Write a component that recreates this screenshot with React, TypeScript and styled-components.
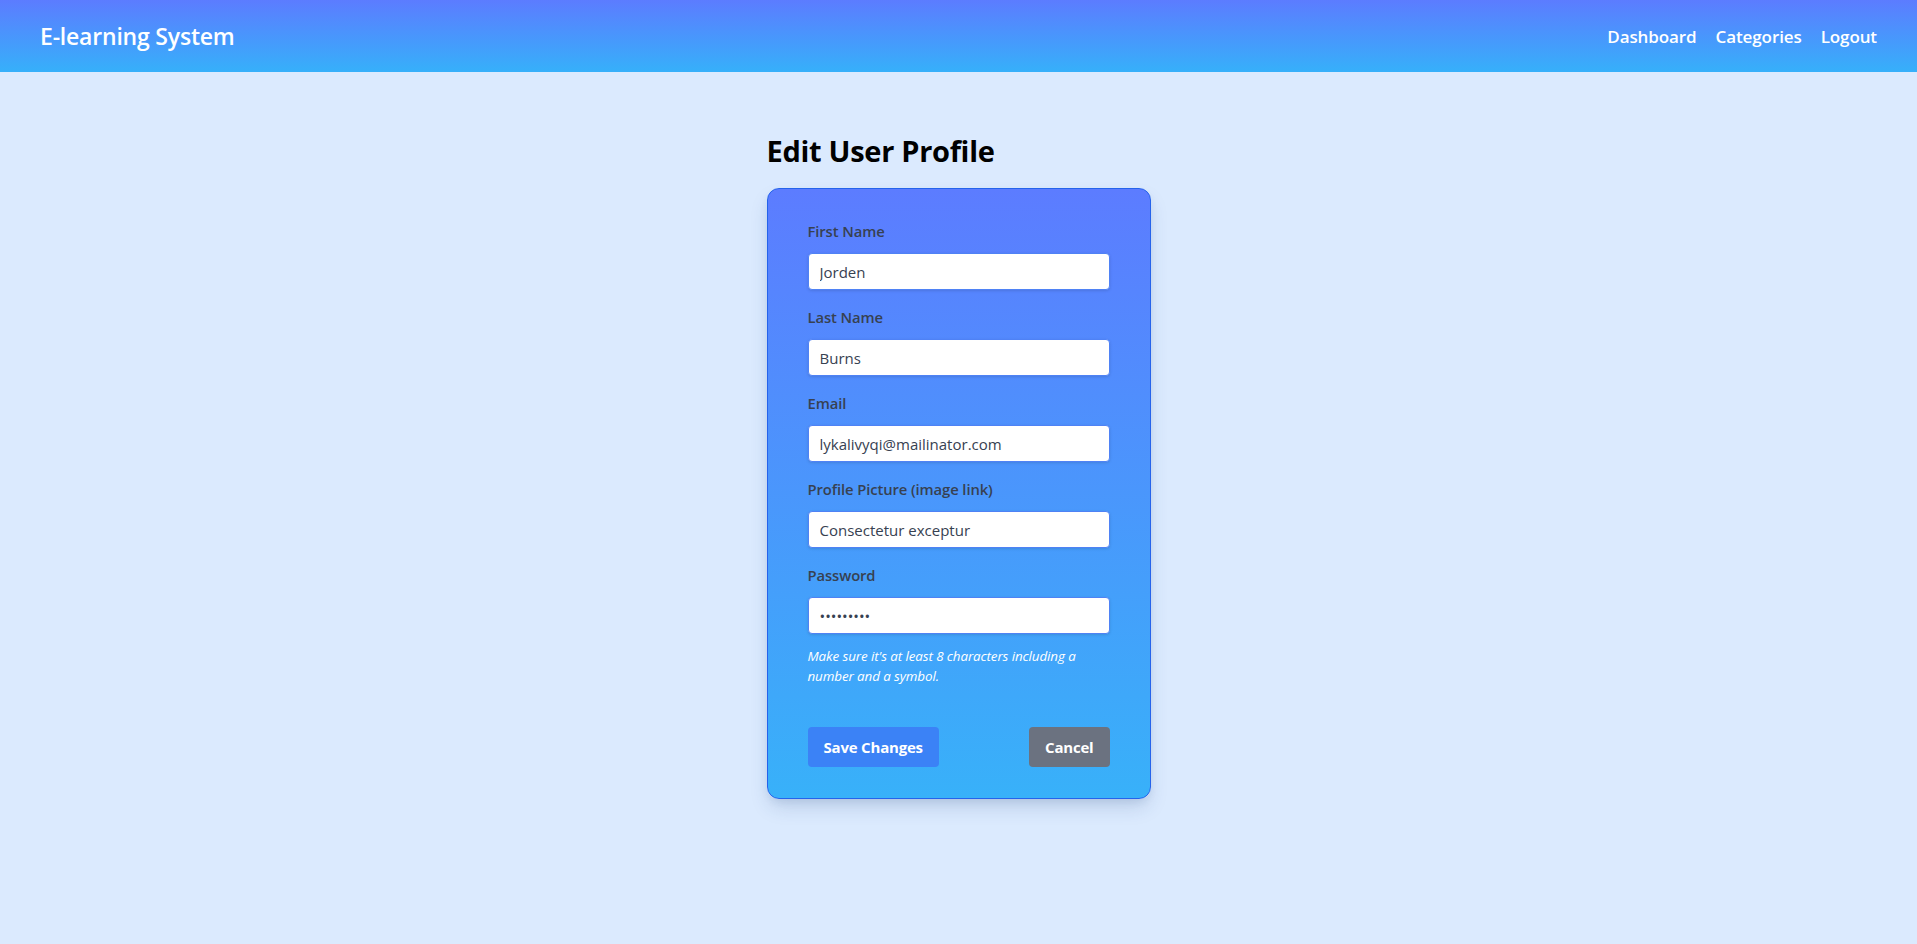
import styled, { createGlobalStyle } from 'styled-components';

const GlobalStyle = createGlobalStyle`
  * {
    box-sizing: border-box;
  }
  body {
    margin: 0;
    background: #dbeafe;
    font-family: 'Open Sans', 'Noto Sans', sans-serif;
  }
`;

interface IField {
  label: string;
  type: string;
  value: string;
}

const FIELDS: IField[] = [
  { label: 'First Name', type: 'text', value: 'Jorden' },
  { label: 'Last Name', type: 'text', value: 'Burns' },
  { label: 'Email', type: 'email', value: 'lykalivyqi@mailinator.com' },
  { label: 'Profile Picture (image link)', type: 'text', value: 'Consectetur exceptur' },
  { label: 'Password', type: 'password', value: '123456789' },
];

const NAV_ITEMS = ['Dashboard', 'Categories', 'Logout'];

const App = () => {
  return (
    <Page>
      <GlobalStyle />
      <Header>
        <Brand>E-learning System</Brand>
        <Nav>
          {NAV_ITEMS.map((item) => (
            <NavLink key={item} href="#">
              {item}
            </NavLink>
          ))}
        </Nav>
      </Header>
      <Main>
        <Title>Edit User Profile</Title>
        <Card onSubmit={(e) => e.preventDefault()}>
          <Fields>
            {FIELDS.map((field) => (
              <Field key={field.label}>
                <Label>{field.label}</Label>
                <Input type={field.type} defaultValue={field.value} />
              </Field>
            ))}
          </Fields>
          <Hint>Make sure it's at least 8 characters including a number and a symbol.</Hint>
          <Actions>
            <Button type="submit" $variant="primary">
              Save Changes
            </Button>
            <Button type="button" $variant="secondary">
              Cancel
            </Button>
          </Actions>
        </Card>
      </Main>
    </Page>
  );
};

const Page = styled.div`
  min-height: 944px;
  background: #dbeafe;
`;

const Header = styled.header`
  display: flex;
  align-items: center;
  justify-content: space-between;
  height: 72px;
  padding: 0 40px;
  background: linear-gradient(to bottom, #5c7cff, #36b0fa);
  color: #fff;
`;

const Brand = styled.h1`
  margin: 0;
  font-size: 23px;
  font-weight: 600;
  letter-spacing: -0.2px;
`;

const Nav = styled.nav`
  display: flex;
  gap: 19px;
`;

const NavLink = styled.a`
  color: #fff;
  text-decoration: none;
  font-size: 17px;
  font-weight: 600;
  letter-spacing: -0.1px;
`;

const Main = styled.main`
  display: flex;
  flex-direction: column;
  width: 384px;
  margin: 0 auto;
  padding-top: 61px;
`;

const Title = styled.h2`
  margin: 0 0 19px;
  font-size: 29px;
  line-height: 36px;
  font-weight: 700;
  color: #000;
  letter-spacing: -0.3px;
`;

const Card = styled.form`
  display: flex;
  flex-direction: column;
  padding: 32px 40px 31px;
  border: 1px solid #2563eb;
  border-radius: 12px;
  background: linear-gradient(to bottom, #5c7cff, #38b1f9);
  box-shadow: 0 10px 20px -3px rgba(30, 64, 120, 0.18), 0 4px 8px -2px rgba(30, 64, 120, 0.1);
`;

const Fields = styled.div`
  display: flex;
  flex-direction: column;
  gap: 17px;
`;

const Field = styled.div`
  display: flex;
  flex-direction: column;
`;

const Label = styled.label`
  margin-bottom: 12px;
  font-size: 14.8px;
  line-height: 20px;
  font-weight: 600;
  color: #374151;
  letter-spacing: -0.1px;
`;

const Input = styled.input`
  height: 37px;
  padding: 0 11px;
  border: 1px solid #4f82f5;
  border-radius: 4px;
  background: #fff;
  box-shadow: 0 1px 3px rgba(0, 0, 0, 0.12);
  font-family: 'Open Sans', 'Noto Sans', sans-serif;
  font-size: 15px;
  color: #374151;
  outline: none;
`;

const Hint = styled.p`
  margin: 12px 0 0;
  font-size: 13.4px;
  line-height: 20px;
  font-style: italic;
  color: #fff;
  letter-spacing: -0.1px;
`;

const Actions = styled.div`
  display: flex;
  justify-content: space-between;
  margin-top: 41px;
`;

const Button = styled.button<{ $variant: 'primary' | 'secondary' }>`
  height: 40px;
  padding: 0 16px;
  border: none;
  border-radius: 4px;
  background: ${({ $variant }) => ($variant === 'primary' ? '#3b82f6' : '#6b7280')};
  color: #fff;
  font-family: 'Open Sans', 'Noto Sans', sans-serif;
  font-size: 15px;
  font-weight: 700;
  letter-spacing: -0.2px;
  cursor: pointer;
`;

export default App;
